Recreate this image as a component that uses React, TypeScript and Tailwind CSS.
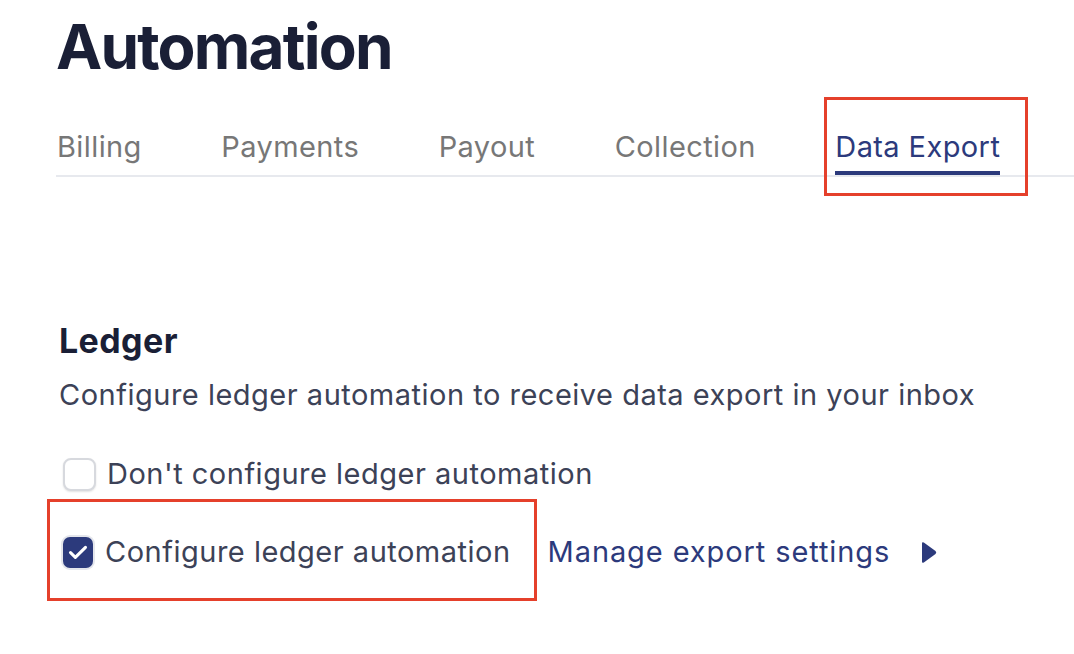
const tabs = ["Billing", "Payments", "Payout", "Collection", "Data Export"];

const Annotation = ({ className }: { className: string }) => (
  <div className={`pointer-events-none absolute border-[3px] border-[#e5402b] ${className}`} />
);

const CheckIcon = () => (
  <svg viewBox="0 0 20 20" className="h-[22px] w-[22px]" fill="none">
    <path d="M3.2 10.6l4.4 4.2L16.8 5.8" stroke="white" strokeWidth="2.8" strokeLinecap="round" strokeLinejoin="round" />
  </svg>
);

export default function App() {
  return (
    <div
      className="min-h-screen w-full overflow-hidden bg-white pl-[56px] text-[#3c4257]"
      style={{ fontFamily: "Inter, 'Noto Sans', sans-serif" }}
    >
      <h1 className="mt-[16px] text-[62px] font-bold leading-[62px] tracking-[-1.8px] text-[#1a1f36]">Automation</h1>

      <div className="mt-[51px] flex gap-[79.5px] border-b-2 border-[#e7e9ee] pl-[1px]">
        {tabs.map((t) => {
          const active = t === "Data Export";
          return (
            <div
              key={t}
              className={`relative border-b-4 pb-[6px] text-[29px] leading-[36px] tracking-[0.4px] ${
                active ? "border-[#2c3a7c] text-[#2c3a7c]" : "border-transparent text-[#777777]"
              }`}
            >
              {t}
              {active && <Annotation className="-top-[32px] -bottom-[25px] -left-[11px] -right-[28px]" />}
            </div>
          );
        })}
      </div>

      <section className="ml-[3px] mt-[144px]">
        <h2 className="text-[34px] font-bold leading-[40px] tracking-[0.4px] text-[#1a1f36]">Ledger</h2>
        <p className="mt-[16px] text-[29px] leading-[36px] tracking-[0.5px]">
          Configure ledger automation to receive data export in your inbox
        </p>

        <label className="mt-[43px] flex items-center gap-[11px] text-[29px] leading-[36px] tracking-[0.5px]">
          <span className="ml-[4px] h-[33px] w-[33px] rounded-[8px] border-2 border-[#d7d9de] bg-white shadow-[0_1px_2px_rgba(0,0,0,0.12)]" />
          Don't configure ledger automation
        </label>

        <div className="mt-[42px] flex items-center text-[29px] leading-[36px] tracking-[0.5px]">
          <label className="relative flex items-center gap-[12px]">
            <span className="ml-[4px] flex h-[31px] w-[30px] shrink-0 items-center justify-center rounded-[7px] bg-[#2c3a7c] shadow-[0_0_0_2px_#e4e6ec]">
              <CheckIcon />
            </span>
            Configure ledger automation
            <Annotation className="-top-[35px] -bottom-[31px] -left-[12px] -right-[26px]" />
          </label>
          <a className="ml-[37px] flex items-center tracking-[0.9px] text-[#2c3a7c]">
            Manage export settings
            <svg viewBox="0 0 17 23" className="ml-[30px] h-[23px] w-[17px]">
              <path d="M2 2.5 Q2 0.5 3.8 1.6 L15.5 10 Q17 11.5 15.5 13 L3.8 21.4 Q2 22.5 2 20.5 Z" fill="#2c3a7c" />
            </svg>
          </a>
        </div>
      </section>
    </div>
  );
}
